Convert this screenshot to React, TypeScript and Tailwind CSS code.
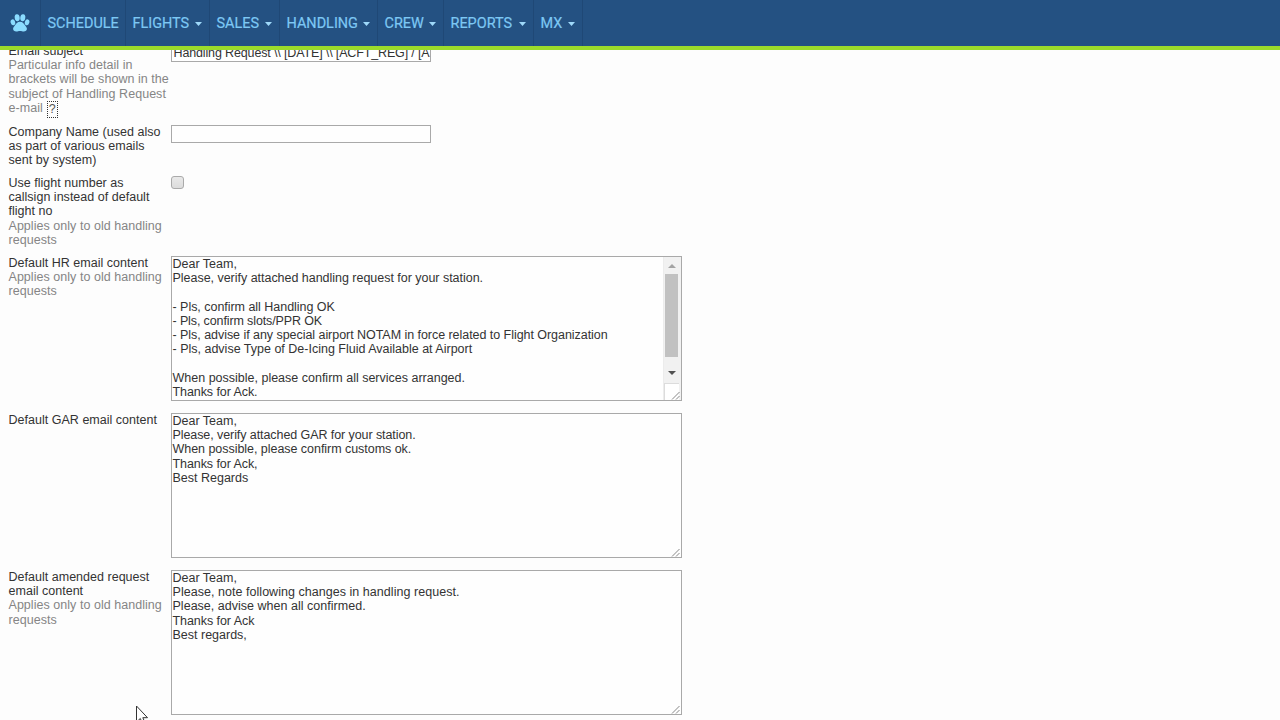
import React from "react";

type NavItem = { label: string; width: string; menu: boolean };

const navItems: NavItem[] = [
  { label: "SCHEDULE", width: "w-[85px]", menu: false },
  { label: "FLIGHTS", width: "w-[84px]", menu: true },
  { label: "SALES", width: "w-[70px]", menu: true },
  { label: "HANDLING", width: "w-[98px]", menu: true },
  { label: "CREW", width: "w-[66px]", menu: true },
  { label: "REPORTS", width: "w-[90px]", menu: true },
  { label: "MX", width: "w-[49px]", menu: true },
];

function Paw() {
  return (
    <svg width="20" height="20" viewBox="0 0 20 20" className="fill-[#8bdcff]">
      <ellipse cx="7.2" cy="4.700" rx="2.500" ry="3.500" transform="rotate(-8 7.2 4.7)" />
      <ellipse cx="12.8" cy="4.700" rx="2.500" ry="3.500" transform="rotate(8 12.8 4.7)" />
      <ellipse cx="2.900" cy="9.300" rx="2.200" ry="3" transform="rotate(-18 2.9 9.3)" />
      <ellipse cx="17.100" cy="9.300" rx="2.200" ry="3" transform="rotate(18 17.1 9.3)" />
      <path d="M10 8.700c-2.600 0-4 2-5.200 3.700-1 1.300-1.700 2-1.700 3.400 0 1.800 1.400 2.700 3.100 2.700 1.500 0 2.300-.5 3.800-.5s2.300.5 3.800.5c1.700 0 3.100-.9 3.100-2.700 0-1.400-.7-2.100-1.700-3.400C14 10.700 12.600 8.700 10 8.700z" />
    </svg>
  );
}

function Nav() {
  return (
    <header className="relative z-10 flex h-[50px] shrink-0 border-b-4 border-[#9bdb2b] bg-[#245182] font-[Roboto,sans-serif] text-[14.450px] text-[#7dc8f4] [-webkit-text-stroke:0.200px_#7dc8f4]">
      <div className="flex w-[41px] items-center border-r border-[#1f4876] pl-[10px]">
        <Paw />
      </div>
      {navItems.map((item) => (
        <div key={item.label} className={`${item.width} flex shrink-0 items-center justify-between border-r border-[#1f4876] pr-[7px] pl-[6.500px]`}>
          <span className="whitespace-nowrap pt-[1px]">{item.label}</span>
          {item.menu && (
            <svg width="7" height="4" viewBox="0 0 7 4" className="mt-[1px] shrink-0 fill-[#9fd9fa]">
              <path d="M0 0h7L3.500 4z" />
            </svg>
          )}
        </div>
      ))}
    </header>
  );
}

function Row({ height, label, hint, children }: { height: string; label: string[]; hint?: React.ReactNode[]; children: React.ReactNode }) {
  return (
    <div className={`${height} flex shrink-0 items-start`}>
      <div className="-mt-[0.400px] w-[162.500px] shrink-0 tracking-[0.020px] whitespace-nowrap text-[#333]">
        {label.map((line) => (
          <div key={line}>{line}</div>
        ))}
        {hint && (
          <div className="tracking-[0.040px] text-[#858585]">
            {hint.map((line, i) => (
              <div key={i}>{line}</div>
            ))}
          </div>
        )}
      </div>
      {children}
    </div>
  );
}

function Grip() {
  return (
    <svg width="9" height="9" viewBox="0 0 9 9" className="absolute right-[1px] bottom-0 stroke-[#888]">
      <path d="M1 8.500L8.500 1M5 8.500L8.500 5" fill="none" />
    </svg>
  );
}

type Line = string | { text: string; tracking: string };

function Area({ lines, scroll }: { lines: Line[]; scroll?: boolean }) {
  return (
    <div className="relative h-[145px] w-[511px] shrink-0 overflow-hidden border border-[#a9a9a9] bg-[#fefefe] pl-[0.500px] text-[#333]">
      <div className="-mt-[0.400px]">
        {lines.map((line, i) => (
          <div key={i} className={`h-[14.300px] whitespace-pre ${typeof line === "string" ? "" : line.tracking}`}>
            {typeof line === "string" ? line : line.text}
          </div>
        ))}
      </div>
      {scroll && (
        <div className="absolute top-0 right-0 flex h-full w-[18px] flex-col items-center border-l border-[#ececec] bg-[#f1f1f1] pr-[2px]">
          <svg width="8" height="4" viewBox="0 0 8 4" className="mt-[7px] shrink-0 fill-[#a3a3a3]"><path d="M0 4h8L4 0z" /></svg>
          <div className="mt-[6px] h-[83px] w-[13px] shrink-0 bg-[#c1c1c1]" />
          <svg width="8" height="4" viewBox="0 0 8 4" className="mt-[14px] shrink-0 fill-[#505050]"><path d="M0 0h8L4 4z" /></svg>
          <div className="mt-auto -mr-[2px] h-[17px] w-full grow-0 self-stretch border border-r-0 border-b-0 border-[#dcdcdc] bg-white" />
        </div>
      )}
      <Grip />
    </div>
  );
}

const oldRequests = ["Applies only to old handling", "requests"];

const hrEmail: Line[] = [
  "Dear Team,",
  { text: "Please, verify attached handling request for your station.", tracking: "tracking-[-0.025px]" },
  "",
  { text: "- Pls, confirm all Handling OK", tracking: "tracking-[-0.030px]" },
  { text: "- Pls, confirm slots/PPR OK", tracking: "tracking-[-0.120px]" },
  { text: "- Pls, advise if any special airport NOTAM in force related to Flight Organization", tracking: "tracking-[-0.045px]" },
  "- Pls, advise Type of De-Icing Fluid Available at Airport",
  "",
  "When possible, please confirm all services arranged.",
  { text: "Thanks for Ack.", tracking: "tracking-[-0.080px]" },
];

const garEmail: Line[] = [
  "Dear Team,",
  { text: "Please, verify attached GAR for your station.", tracking: "tracking-[-0.080px]" },
  { text: "When possible, please confirm customs ok.", tracking: "tracking-[-0.040px]" },
  { text: "Thanks for Ack,", tracking: "tracking-[-0.080px]" },
  "Best Regards",
];

const amendedEmail: Line[] = [
  "Dear Team,",
  { text: "Please, note following changes in handling request.", tracking: "tracking-[0.040px]" },
  { text: "Please, advise when all confirmed.", tracking: "tracking-[0.020px]" },
  { text: "Thanks for Ack", tracking: "tracking-[-0.060px]" },
  "Best regards,",
];

export default function App() {
  return (
    <div className="relative flex h-[720px] w-[1280px] flex-col overflow-hidden bg-[#fdfdfd]">
      <Nav />
      <main className="-mt-[6px] flex flex-col pl-[8.500px] font-['Liberation_Sans',Arial,sans-serif] text-[12.500px] leading-[14.300px]">
        <Row
          height="h-[81px]"
          label={["Email subject"]}
          hint={[
            "Particular info detail in",
            "brackets will be shown in the",
            "subject of Handling Request",
            <span key="mail" className="flex">
              e-mail
              <span className="ml-[4px] h-[17px] w-[11px] border border-dotted border-[#333] text-center text-[#555]">?</span>
            </span>,
          ]}
        >
          <div className="h-[18px] w-[260px] border border-[#a9a9a9] bg-white pt-[1px] pl-[1.500px] tracking-[-0.140px] whitespace-nowrap text-[#333]">
            {"Handling Request \\\\ [DATE] \\\\ [ACFT_REG] / [A"}
          </div>
        </Row>
        <Row height="h-[51px]" label={["Company Name (used also", "as part of various emails", "sent by system)"]}>
          <div className="h-[18px] w-[260px] border border-[#a9a9a9] bg-[#fefefe]" />
        </Row>
        <Row height="h-[80px]" label={["Use flight number as", "callsign instead of default", "flight no"]} hint={oldRequests}>
          <div className="h-[13px] w-[13px] rounded-[3px] border border-[#aaa] bg-linear-to-b from-[#e9e9e9] to-[#dcdcdc]" />
        </Row>
        <Row height="h-[157px]" label={["Default HR email content"]} hint={oldRequests}>
          <Area lines={hrEmail} scroll />
        </Row>
        <Row height="h-[157px]" label={["Default GAR email content"]}>
          <Area lines={garEmail} />
        </Row>
        <Row height="h-[150px]" label={["Default amended request", "email content"]} hint={oldRequests}>
          <Area lines={amendedEmail} />
        </Row>
      </main>
      <svg width="14" height="20" viewBox="0 0 14 20" className="absolute top-[705px] left-[135px]">
        <path d="M1.500 1v16l3.800-3.500 2.400 5.500 2.500-1-2.400-5.300H12.500z" fill="#fff" stroke="#333" />
      </svg>
    </div>
  );
}
